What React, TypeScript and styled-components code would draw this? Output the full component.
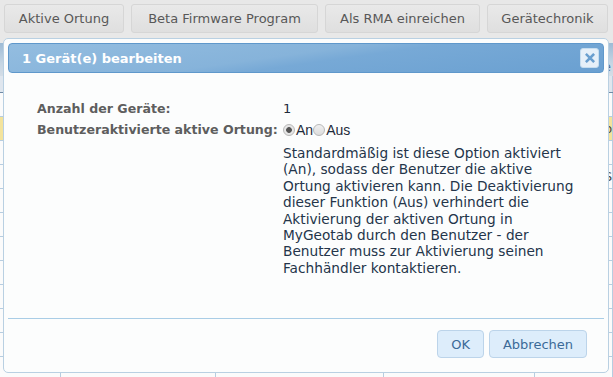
import React from 'react';
import styled, { createGlobalStyle } from 'styled-components';

const GlobalStyle = createGlobalStyle`
  html, body {
    margin: 0;
    padding: 0;
    background: #e8e8e8;
    font-family: 'DejaVu Sans', Verdana, sans-serif;
    overflow: hidden;
  }
`;

const toolbarItems = [
  { label: 'Aktive Ortung', width: 120 },
  { label: 'Beta Firmware Program', width: 187 },
  { label: 'Als RMA einreichen', width: 155 },
  { label: 'Gerätechronik', width: 121 },
];

const columns = [61, 155, 168, 151, 78];

// rows of the list that lies behind the dialog
const rows = [
  { kind: 'filter', text: '' },
  { kind: 'plain', text: '' },
  { kind: 'marked', text: 'o' },
  { kind: 'plain', text: '' },
  { kind: 'plain', text: 'S' },
  { kind: 'plain', text: '' },
  { kind: 'plain', text: '' },
  { kind: 'plain', text: '' },
  { kind: 'plain', text: '' },
  { kind: 'plain', text: '' },
  { kind: 'plain', text: '' },
  { kind: 'plain', text: '' },
  { kind: 'plain', text: '' },
];

const description =
  'Standardmäßig ist diese Option aktiviert (An), sodass der Benutzer die aktive Ortung aktivieren kann. Die Deaktivierung dieser Funktion (Aus) verhindert die Aktivierung der aktiven Ortung in MyGeotab durch den Benutzer - der Benutzer muss zur Aktivierung seinen Fachhändler kontaktieren.';

const App: React.FC = () => {
  return (
    <Page>
      <GlobalStyle />
      <Toolbar>
        {toolbarItems.map(item => (
          <ToolButton key={item.label} style={{ width: item.width }}>
            {item.label}
          </ToolButton>
        ))}
      </Toolbar>
      <Grid>
        <GridHeader>
          <HeaderText>e</HeaderText>
        </GridHeader>
        {rows.map((row, i) => (
          <GridRow key={i} kind={row.kind}>
            {columns.map((w, c) => (
              <GridCell key={c} style={{ width: w }}>
                {c === columns.length - 1 ? row.text : ''}
              </GridCell>
            ))}
          </GridRow>
        ))}
      </Grid>

      <Dialog>
        <TitleBar>
          <Title>1 Gerät(e) bearbeiten</Title>
          <CloseButton aria-label="close">
            <svg width="10" height="10" viewBox="0 0 10 10">
              <path
                d="M1.8 1.8 L8.2 8.2 M8.2 1.8 L1.8 8.2"
                stroke="#6a9fcf"
                strokeWidth="2.6"
                strokeLinecap="square"
              />
            </svg>
          </CloseButton>
        </TitleBar>
        <Body>
          <FieldRow>
            <Label>Anzahl der Geräte:</Label>
            <Value>1</Value>
          </FieldRow>
          <FieldRow>
            <Label>Benutzeraktivierte aktive Ortung:</Label>
            <RadioGroup>
              <Radio checked />
              <RadioText>An</RadioText>
              <Radio />
              <RadioText>Aus</RadioText>
            </RadioGroup>
          </FieldRow>
          <HintRow>
            <Hint>{description}</Hint>
          </HintRow>
        </Body>
        <Footer>
          <DialogButton>OK</DialogButton>
          <DialogButton>Abbrechen</DialogButton>
        </Footer>
      </Dialog>
    </Page>
  );
};

const Page = styled.div`
  position: relative;
  width: 613px;
  height: 377px;
  overflow: hidden;
  background: #e8e8e8;
`;

const Toolbar = styled.div`
  display: flex;
  gap: 7px;
  padding: 4px 4px 0;
  height: 34px;
  box-sizing: border-box;
`;

const ToolButton = styled.div`
  height: 29px;
  box-sizing: border-box;
  border: 1px solid #d6d6d6;
  border-radius: 3px;
  background: linear-gradient(#e9e9e9, #dfdfdf);
  color: #585858;
  font-size: 13px;
  display: flex;
  align-items: center;
  justify-content: center;
`;

const Grid = styled.div`
  display: flex;
  flex-flow: column;
  margin-top: 9px;
  background: #fff;
`;

const GridHeader = styled.div`
  height: 33px;
  background: linear-gradient(#9dbbd6, #c5d5e3 60%, #d4dde6);
  display: flex;
  align-items: flex-end;
  justify-content: flex-end;
  padding-right: 2px;
`;

const HeaderText = styled.span`
  font-size: 12px;
  color: #4a6d92;
  padding-bottom: 2px;
`;

const GridRow = styled.div<{ kind: string }>`
  display: flex;
  height: ${p => (p.kind === 'filter' ? '16px' : '23px')};
  background: ${p =>
    p.kind === 'marked' ? '#f3e39c' : p.kind === 'filter' ? '#dfe6ee' : '#fbfbfb'};
  border-bottom: 1px solid
    ${p => (p.kind === 'filter' ? '#6f8aa5' : '#b7cde0')};
`;

const GridCell = styled.div`
  border-right: 1px solid #b7cde0;
  font-size: 12px;
  color: #444;
  display: flex;
  align-items: center;
  justify-content: flex-end;
  box-sizing: border-box;
`;

const Dialog = styled.div`
  position: absolute;
  left: 3px;
  top: 38px;
  width: 606px;
  height: 335px;
  box-sizing: border-box;
  background: #fcfdfd;
  border: 1px solid #b9d0e2;
  border-radius: 5px;
  padding: 4px;
  display: flex;
  flex-flow: column;
`;

const TitleBar = styled.div`
  height: 30px;
  box-sizing: border-box;
  border: 1px solid #5f98cb;
  border-radius: 4px;
  background: linear-gradient(
    172deg,
    #93bde0 0%,
    #86b3da 45%,
    #77a9d6 55%,
    #6aa0d1 100%
  );
  display: flex;
  align-items: center;
  justify-content: space-between;
  padding: 0 4px 0 13px;
`;

const Title = styled.span`
  color: #fff;
  font-weight: bold;
  font-size: 13px;
`;

const CloseButton = styled.div`
  width: 19px;
  height: 20px;
  box-sizing: border-box;
  border: 1px solid #c6ddef;
  border-radius: 3px;
  background: #e6f0f9;
  display: flex;
  align-items: center;
  justify-content: center;
`;

const Body = styled.div`
  flex: 1;
  padding: 25px 0 0 29px;
  display: flex;
  flex-flow: column;
`;

const FieldRow = styled.div`
  display: flex;
  align-items: center;
  height: 21px;
`;

const Label = styled.div`
  width: 246px;
  flex-shrink: 0;
  white-space: nowrap;
  font-size: 12.6px;
  font-weight: bold;
  color: #5e5e5e;
`;

const Value = styled.div`
  font-size: 13px;
  color: #1f2b3a;
`;

const RadioGroup = styled.div`
  display: flex;
  align-items: center;
  font-family: 'Liberation Sans', Arial, sans-serif;
`;

const Radio = styled.span<{ checked?: boolean }>`
  width: 12px;
  height: 12px;
  box-sizing: border-box;
  border-radius: 50%;
  border: 1px solid #b8b8b8;
  background: ${p =>
    p.checked
      ? 'radial-gradient(circle, #555 0 2.5px, #e6e6e6 3.2px)'
      : 'linear-gradient(#f0f0f0, #dcdcdc)'};
  margin-right: 1px;
`;

const RadioText = styled.span`
  font-size: 14px;
  color: #1f2b3a;
`;

const HintRow = styled.div`
  padding: 5px 0 0 246px;
`;

const Hint = styled.div`
  width: 300px;
  font-size: 13.7px;
  line-height: 16.4px;
  color: #24354a;
`;

const Footer = styled.div`
  border-top: 1px solid #a9cde6;
  display: flex;
  justify-content: flex-end;
  gap: 5px;
  padding: 11px 17px 10px 0;
`;

const DialogButton = styled.div`
  height: 28px;
  box-sizing: border-box;
  padding: 0 13px;
  border: 1px solid #bcd4ea;
  border-radius: 4px;
  background: #ddedfb;
  color: #3b6a98;
  font-size: 13px;
  display: flex;
  align-items: center;
  justify-content: center;
`;

export default App;
